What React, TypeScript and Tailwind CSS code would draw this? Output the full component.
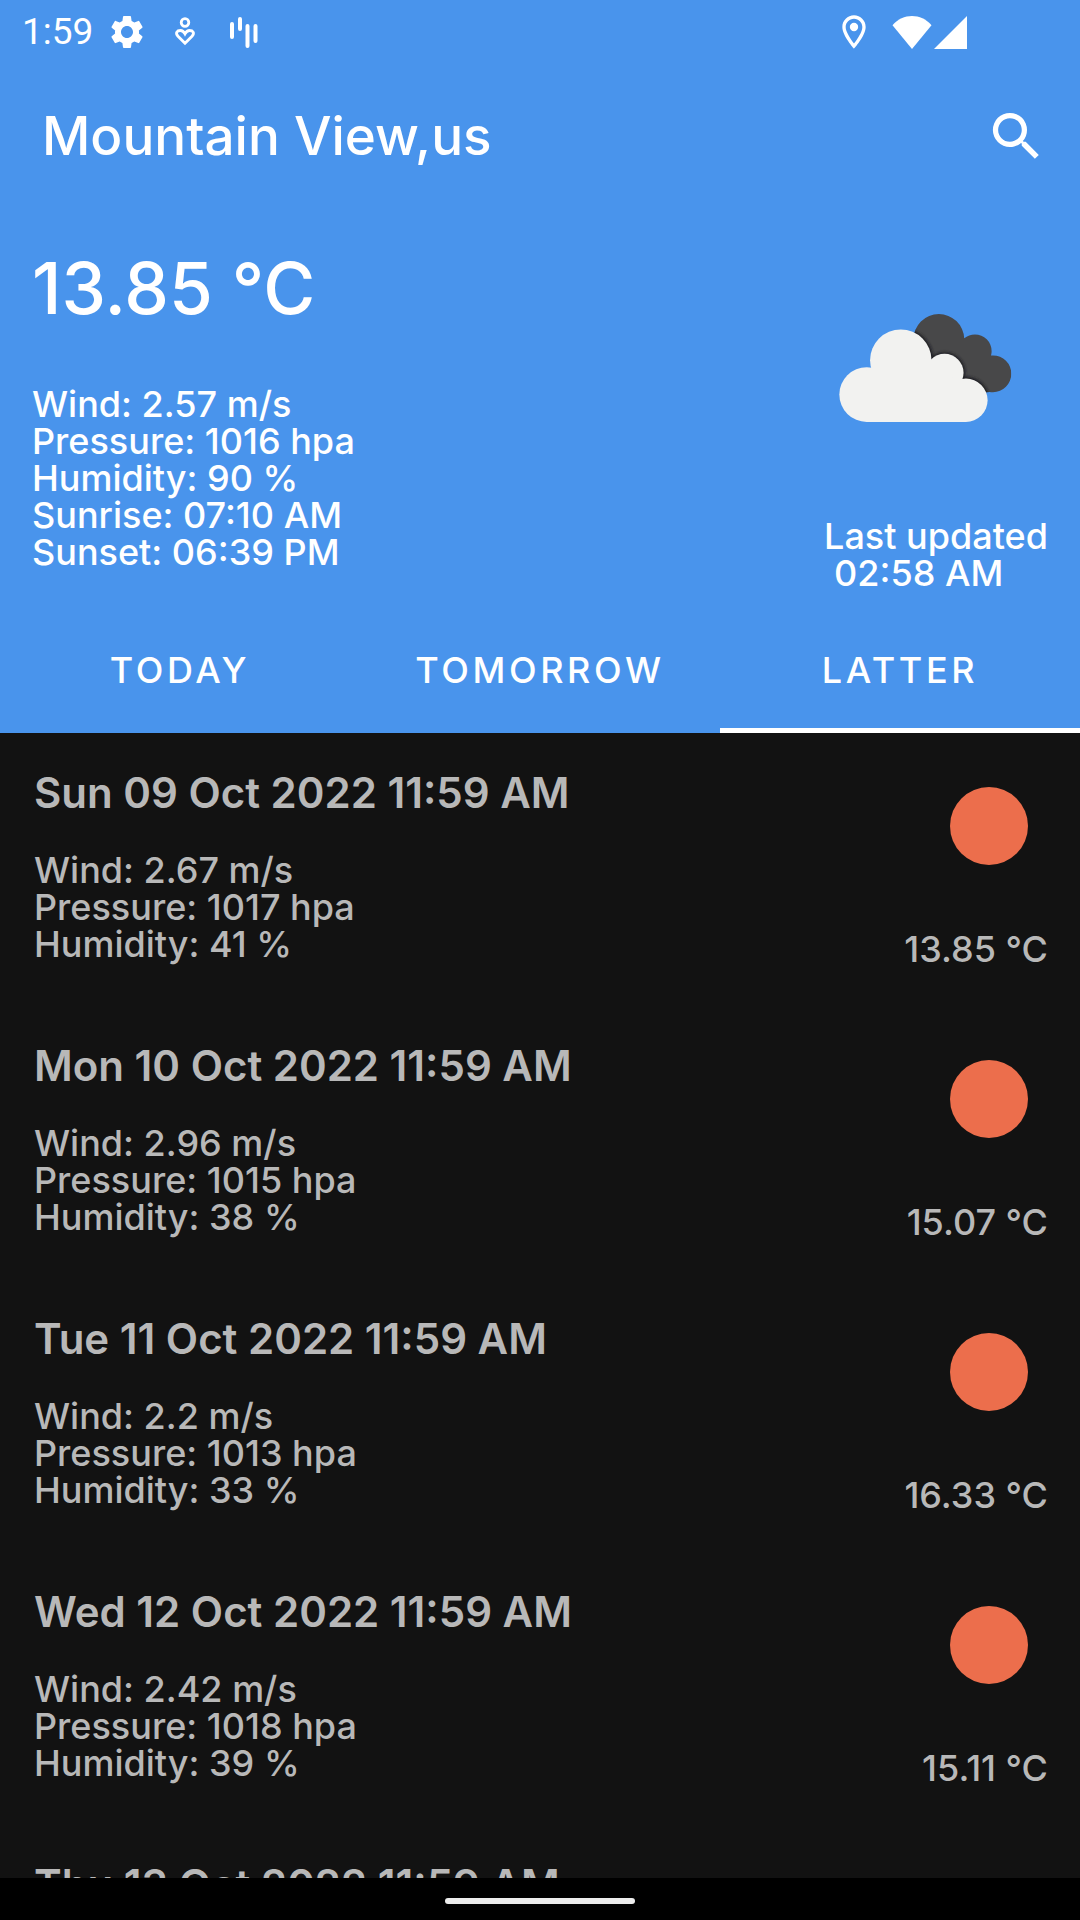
import { MdOutlineLocationOn, MdSearch, MdSettings } from "react-icons/md";

const current = [
  "Wind: 2.57 m/s",
  "Pressure: 1016 hpa",
  "Humidity: 90 %",
  "Sunrise: 07:10 AM",
  "Sunset: 06:39 PM",
];

const tabs = [
  { label: "Today", active: false },
  { label: "Tomorrow", active: false },
  { label: "Latter", active: true },
];

type Day = {
  date: string;
  details?: { wind: string; pressure: string; humidity: string; temp: string };
};

const forecast: Day[] = [
  { date: "Sun 09 Oct 2022 11:59 AM", details: { wind: "2.67", pressure: "1017", humidity: "41", temp: "13.85" } },
  { date: "Mon 10 Oct 2022 11:59 AM", details: { wind: "2.96", pressure: "1015", humidity: "38", temp: "15.07" } },
  { date: "Tue 11 Oct 2022 11:59 AM", details: { wind: "2.2", pressure: "1013", humidity: "33", temp: "16.33" } },
  { date: "Wed 12 Oct 2022 11:59 AM", details: { wind: "2.42", pressure: "1018", humidity: "39", temp: "15.11" } },
  { date: "Thu 13 Oct 2022 11:59 AM" },
];

function StatusBar() {
  return (
    <div className="flex h-16 items-center justify-between pl-[22px] pr-[113px]">
      <div className="flex items-center">
        <span className="font-['Roboto',sans-serif] text-[37px] font-normal leading-10">1:59</span>
        <MdSettings className="ml-3.5 size-10" />
        <svg className="ml-[26px] h-8 w-6" viewBox="0 0 24 32" fill="none" stroke="currentColor" strokeWidth="2.8">
          <circle cx="12" cy="6.5" r="3.8" />
          <path d="M12 27.3 5 20.3C2 17 4 14.500 7.500 14.500C9.500 14.500 11 16 12 17.800C13 16 14.500 14.500 16.500 14.500C20 14.500 22 17 19 20.3Z" />
        </svg>
        <svg className="ml-8 h-8 w-8" viewBox="0 0 32 32" stroke="currentColor" strokeWidth="4" strokeLinecap="round">
          <path d="M3 8v13M11 3v10M18.500 10v20M26.500 10v15" />
        </svg>
      </div>
      <div className="flex items-center">
        <MdOutlineLocationOn className="size-10" />
        <svg className="ml-[18px] h-[33px] w-10" viewBox="0 0 40 33" fill="currentColor">
          <path d="M.5 9.300C11-3 29-3 39.500 9.300L20 33Z" />
        </svg>
        <svg className="ml-0.5 size-[33px]" viewBox="0 0 33 33" fill="currentColor">
          <path d="M33 0v33H0Z" />
        </svg>
      </div>
    </div>
  );
}

function CloudsIcon() {
  const front = (
    <>
      <circle cx="259" cy="312" r="82" />
      <circle cx="361" cy="209" r="92" />
      <circle cx="492" cy="247" r="57" />
      <circle cx="556" cy="329" r="65" />
      <path d="M259 240H380L440 200 500 250 556 290V394H259Z" />
    </>
  );
  return (
    <svg className="h-28 w-[177px]" viewBox="170 65 530 335" role="img" aria-label="Broken clouds">
      <defs>
        <clipPath id="back-cloud">
          <circle cx="475" cy="147" r="76" />
          <circle cx="583" cy="182" r="50" />
          <circle cx="637" cy="250" r="55" />
          <path d="M420 100 545 145 628 195V304L560 310 430 230Z" />
        </clipPath>
        <filter id="soft" x="-10%" y="-10%" width="120%" height="120%">
          <feGaussianBlur stdDeviation="4" />
        </filter>
      </defs>
      <g clipPath="url(#back-cloud)">
        <rect x="380" y="60" width="320" height="260" fill="#484849" />
        <g fill="#1f1f20" stroke="#1f1f20" strokeWidth="10" filter="url(#soft)">{front}</g>
      </g>
      <g fill="#f2f2f0">{front}</g>
    </svg>
  );
}

export default function App() {
  return (
    <div className="flex h-screen flex-col bg-[#121212] font-['Inter',sans-serif] text-[36px] font-medium leading-[37px]">
      <header className="shrink-0 bg-[#4994ec] text-white">
        <StatusBar />
        <div className="flex h-36 items-center justify-between pl-[42px] pr-8">
          <h1 className="text-[53px] leading-[60px]">Mountain View,us</h1>
          <button type="button" aria-label="Search">
            <MdSearch className="size-[63px]" />
          </button>
        </div>
        <section className="flex justify-between px-8 pt-10">
          <div>
            <p className="text-[71px] leading-[80px]">13.85 °C</p>
            <div className="pt-[58px]">
              {current.map((line) => (
                <p key={line}>{line}</p>
              ))}
            </div>
          </div>
          <div className="flex flex-col items-end pt-16">
            <div className="pr-[34px]">
              <CloudsIcon />
            </div>
            <p className="pt-[94px]">
              Last updated
              <br />
              <span className="pl-2.5">02:58 AM</span>
            </p>
          </div>
        </section>
        <div role="tablist" className="mt-3.5 grid grid-cols-3">
          {tabs.map((tab) => (
            <button
              key={tab.label}
              type="button"
              role="tab"
              aria-selected={tab.active}
              className="h-[127px] border-b-[5px] border-transparent pt-1.5 uppercase tracking-widest aria-selected:border-white"
            >
              {tab.label}
            </button>
          ))}
        </div>
      </header>

      <main className="min-h-0 flex-1 overflow-y-auto text-[#b8b8b8] [scrollbar-width:none]">
        <ul>
          {forecast.map(({ date, details }) => (
            <li key={date} className="flex h-[273px] justify-between pl-[34px] pr-8">
              <div className="pt-9">
                <h2 className="text-[42px] font-semibold leading-[48px]">{date}</h2>
                {details && (
                  <div className="pt-[35px]">
                    <p>Wind: {details.wind} m/s</p>
                    <p>Pressure: {details.pressure} hpa</p>
                    <p>Humidity: {details.humidity} %</p>
                  </div>
                )}
              </div>
              {details && (
                <div className="flex flex-col items-end pt-[54px]">
                  <div role="img" aria-label="Clear sky" className="mr-5 size-[78px] rounded-full bg-[#ec6e4c]" />
                  <p className="pt-[66px]">{details.temp} °C</p>
                </div>
              )}
            </li>
          ))}
        </ul>
      </main>

      <footer className="flex h-[42px] shrink-0 items-center justify-center bg-black pt-1">
        <div className="h-1.5 w-[190px] rounded-full bg-[#ececec]" />
      </footer>
    </div>
  );
}
